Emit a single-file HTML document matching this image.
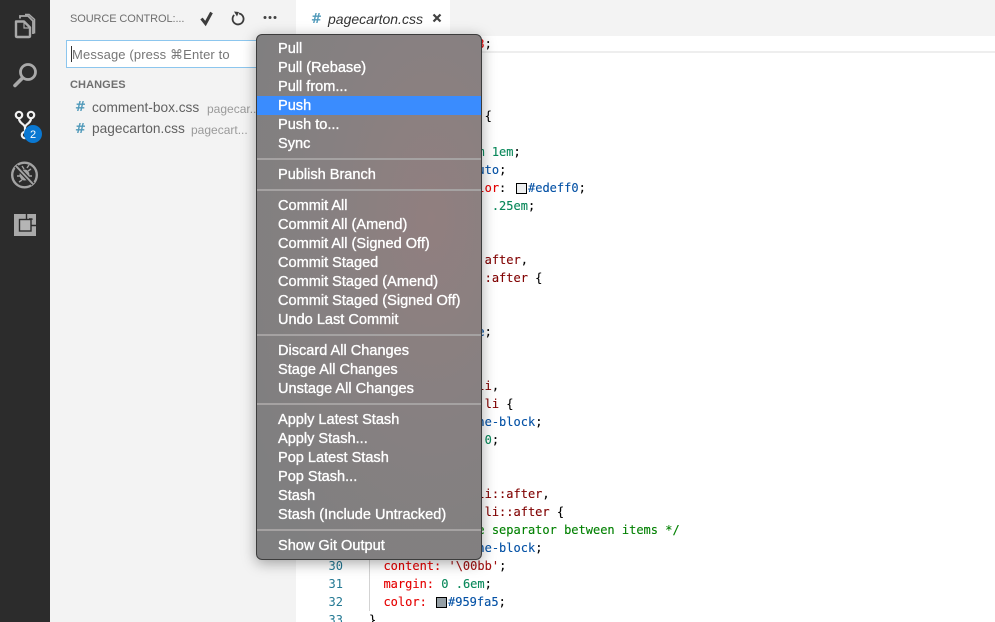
<!DOCTYPE html>
<html><head><meta charset="utf-8">
<style>
html,body{margin:0;padding:0;width:995px;height:622px;overflow:hidden;background:#fff}
body{position:relative;font-family:"Liberation Sans",sans-serif}
.a{position:absolute;white-space:nowrap}
#act{left:0;top:0;width:50px;height:622px;background:#2c2c2c}
#side{left:50px;top:0;width:246px;height:622px;background:#f3f3f3}
#tabs{left:296px;top:0;width:699px;height:36px;background:#f3f3f3}
#tab{left:296px;top:0;width:154px;height:37px;background:#fff}
.hl{left:296px;top:51px;width:699px;height:2px;background:#eeeeee}
.code{font:12px/18px "DejaVu Sans Mono",monospace;color:#000;left:369px;white-space:pre;-webkit-text-stroke:.12px currentColor}
.p{color:#e50000}.b{color:#0451a5}.g{color:#09885a}.s{color:#800000}.c{color:#008000}.st{color:#a31515}
.ln{font:12px/18px "DejaVu Sans Mono",monospace;color:#237893;width:30px;text-align:right;left:313px}
.sw{position:absolute;width:9px;height:9px;border:1px solid #000}
.hash{color:#519aba;font:bold 13px/18px "DejaVu Sans",sans-serif}
#menu{left:256px;top:34px;width:224px;height:524px;border:1px solid #3c3c3c;border-radius:6px;
background:radial-gradient(ellipse at 78% 35%,#917f7f 0%,#878081 40%,#7f7f80 85%);
box-shadow:0 3px 14px rgba(0,0,0,.35);overflow:hidden;color:#fff;font-size:14.55px}
#menu div{position:absolute;left:0;width:224px;height:19px;line-height:21px;padding-left:21px;box-sizing:border-box;white-space:nowrap;-webkit-text-stroke:.35px #fff}
#menu div.on{background:#3a8cfe}
#menu i{position:absolute;left:0;width:224px;height:2px;background:#a5a2a2}
</style></head>
<body>
<div class="a" id="act"></div>
<div class="a" id="side"></div>
<div class="a" id="tabs"></div>
<div class="a" id="tab"></div>
<div class="a hl"></div>

<svg class="a" style="left:0;top:0" width="50" height="245" viewBox="0 0 50 245" fill="none">
  <g stroke="#a9a9a9" stroke-width="2.400">
    <path d="M16 21.500h8l6 6v8.500c0 .6-.4 1-1 1H17c-.6 0-1-.4-1-1z" stroke-linejoin="round"/>
    <path d="M24 21v7h6" stroke-width="1.200"/>
    <path d="M20 18.500v-2.500h8l5 5v13" stroke-width="1.800"/>
    <path d="M25 14.500h4l5.500 5v14" stroke-width="1.500"/>
    <circle cx="28" cy="72" r="7.500" stroke-width="2.800"/>
    <path d="M22.500 78L15 85.500" stroke-width="3.600" stroke-linecap="round"/>
  </g>
  <g stroke="#f2f2f2" stroke-width="2.200">
    <circle cx="19" cy="115" r="3.200"/><circle cx="31" cy="115" r="3.200"/><circle cx="25" cy="135" r="3.200"/>
    <path d="M19 118.500c0 5 6 5.500 6 9v4M31 118.500c0 5-6 5.500-6 9"/>
  </g>
  <circle cx="33" cy="134" r="9" fill="#0a78d2"/>
  <text x="33" y="138" font-family="Liberation Sans,sans-serif" font-size="11" fill="#fff" text-anchor="middle">2</text>
  <g stroke="#a3a3a3">
    <circle cx="24.500" cy="175" r="12.300" stroke-width="2.400"/>
    <path d="M18 170l4 2M31 169l-3 2M17 176h4M32 176h-4M19 182l3-2M30 182l-3-2M22 166l2 3M29 165l-2 3" stroke-width="1.400"/>
    <ellipse cx="24.500" cy="175" rx="5" ry="5.500" fill="#a3a3a3" stroke="none"/>
    <path d="M16 166l17 18" stroke="#2c2c2c" stroke-width="4.200"/>
    <path d="M16 166l17 18" stroke-width="2"/>
  </g>
  <rect x="14" y="214" width="22" height="22" fill="#a9a9a9"/>
  <rect x="19.500" y="219.500" width="11.500" height="11.500" fill="#b5b5b5" stroke="#2c2c2c" stroke-width="1.400"/>
  <path d="M26.500 214v5M31.500 225.500H36M29 219h3v-.5" stroke="#2c2c2c" stroke-width="1.400" fill="none"/>
</svg>

<div class="a" style="left:70px;top:12px;font-size:11px;line-height:14px;color:#6f6f6f;letter-spacing:-.1px">SOURCE CONTROL:...</div>
<svg class="a" style="left:198px;top:8px" width="85" height="22" viewBox="0 0 85 22" fill="none">
  <path d="M3.500 10.500L7.500 15.500L13.500 4.500" stroke="#3c3c3c" stroke-width="3"/>
  <path d="M41 5.500a5.500 5.500 0 1 1-4.800 1.500" stroke="#3c3c3c" stroke-width="1.800"/>
  <path d="M36 3.500l5 .5-2 4.500z" fill="#3c3c3c"/>
  <circle cx="67" cy="9.500" r="1.500" fill="#424242"/><circle cx="72" cy="9.500" r="1.500" fill="#424242"/><circle cx="77" cy="9.500" r="1.500" fill="#424242"/>
</svg>

<div class="a" style="left:66px;top:40px;width:200px;height:26px;background:#fff;border:1px solid #8cc6ee"></div>
<div class="a" style="left:71px;top:46px;width:1px;height:16px;background:#333"></div>
<div class="a" style="left:72px;top:47px;font-size:13px;line-height:16px;color:#767676;letter-spacing:.13px;font-family:'Liberation Sans','DejaVu Sans',sans-serif">Message (press ⌘Enter to</div>

<div class="a" style="left:70px;top:78px;font-size:11px;line-height:14px;font-weight:bold;color:#6f6f6f;letter-spacing:.1px">CHANGES</div>
<div class="a hash" style="left:75px;top:99px">#</div>
<div class="a" style="left:92px;top:99px;font-size:13.700px;line-height:18px;color:#616161">comment-box.css</div>
<div class="a" style="left:207px;top:100px;font-size:12px;line-height:18px;color:#9a9a9a">pagecar...</div>
<div class="a hash" style="left:75px;top:121px">#</div>
<div class="a" style="left:92px;top:120px;font-size:13.700px;line-height:18px;color:#616161">pagecarton.css</div>
<div class="a" style="left:191px;top:121px;font-size:12px;line-height:18px;color:#9a9a9a">pagecart...</div>

<div class="a hash" style="left:311px;top:11px">#</div>
<div class="a" style="left:328px;top:10px;font-size:14px;line-height:18px;font-style:italic;color:#333">pagecarton.css</div>
<svg class="a" style="left:432px;top:13px" width="10" height="10"><path d="M1.500 1.500l7 7M8.500 1.500l-7 7" stroke="#424242" stroke-width="2.200"/></svg>

<div class="a" style="left:369px;top:557px;width:1px;height:54px;background:#d3d3d3"></div>

<div class="a code" style="top:35px">  color: <span class="p">#333333</span>;</div>
<div class="a code" style="top:107px"><span class="s">.breadcrumb-nav</span> {</div>
<div class="a code" style="top:143px">  <span class="p">padding:</span> <span class="g">.75em 1em</span>;</div>
<div class="a code" style="top:161px">  <span class="p">list-style:</span> <span class="b">auto</span>;</div>
<div class="a code" style="top:179px">  <span class="p">background-color</span>:</div>
<div class="sw" style="left:516px;top:183px;background:#edeff0"></div>
<div class="a code" style="top:179px;left:528px"><span class="b">#edeff0</span>;</div>
<div class="a code" style="top:197px">  <span class="p">border-radius</span>: <span class="g">.25em</span>;</div>
<div class="a code" style="top:251px"><span class="s">.breadcrumb-ol::after</span>,</div>
<div class="a code" style="top:269px"><span class="s">.breadcrumb-nav::after</span> {</div>
<div class="a code" style="top:323px">  <span class="p">display:</span> <span class="b">table</span>;</div>
<div class="a code" style="top:377px"><span class="s">.breadcrumb-ol li</span>,</div>
<div class="a code" style="top:395px"><span class="s">.breadcrumb-nav li</span> {</div>
<div class="a code" style="top:413px">  <span class="p">display:</span> <span class="b">inline-block</span>;</div>
<div class="a code" style="top:431px">  <span class="p">margin:</span> <span class="g">0 0 0 0</span>;</div>
<div class="a code" style="top:485px"><span class="s">.breadcrumb-ol li::after</span>,</div>
<div class="a code" style="top:503px"><span class="s">.breadcrumb-nav li::after</span> {</div>
<div class="a code" style="top:521px">  <span class="c">/* insert some separator between items */</span></div>
<div class="a code" style="top:539px">  <span class="p">display:</span> <span class="b">inline-block</span>;</div>
<div class="a code" style="top:557px">  <span class="p">content:</span> <span class="st">'\00bb'</span>;</div>
<div class="a code" style="top:575px">  <span class="p">margin:</span> <span class="g">0 .6em</span>;</div>
<div class="a code" style="top:593px">  <span class="p">color:</span></div>
<div class="sw" style="left:436px;top:597px;background:#959fa5"></div>
<div class="a code" style="top:593px;left:448px"><span class="b">#959fa5</span>;</div>
<div class="a code" style="top:611px">}</div>
<div class="a ln" style="top:557px">30</div>
<div class="a ln" style="top:575px">31</div>
<div class="a ln" style="top:593px">32</div>
<div class="a ln" style="top:611px">33</div>

<div class="a" id="menu">
<div style="top:3.500px">Pull</div>
<div style="top:22.500px">Pull (Rebase)</div>
<div style="top:41.500px">Pull from...</div>
<div class="on" style="top:60.500px">Push</div>
<div style="top:79.500px">Push to...</div>
<div style="top:98.500px">Sync</div>
<i style="top:123px"></i>
<div style="top:129.500px">Publish Branch</div>
<i style="top:154px"></i>
<div style="top:160.500px">Commit All</div>
<div style="top:179.500px">Commit All (Amend)</div>
<div style="top:198.500px">Commit All (Signed Off)</div>
<div style="top:217.500px">Commit Staged</div>
<div style="top:236.500px">Commit Staged (Amend)</div>
<div style="top:255.500px">Commit Staged (Signed Off)</div>
<div style="top:274.500px">Undo Last Commit</div>
<i style="top:299px"></i>
<div style="top:305.500px">Discard All Changes</div>
<div style="top:324.500px">Stage All Changes</div>
<div style="top:343.500px">Unstage All Changes</div>
<i style="top:368px"></i>
<div style="top:374.500px">Apply Latest Stash</div>
<div style="top:393.500px">Apply Stash...</div>
<div style="top:412.500px">Pop Latest Stash</div>
<div style="top:431.500px">Pop Stash...</div>
<div style="top:450.500px">Stash</div>
<div style="top:469.500px">Stash (Include Untracked)</div>
<i style="top:494px"></i>
<div style="top:500.500px">Show Git Output</div>
</div>
</body></html>
